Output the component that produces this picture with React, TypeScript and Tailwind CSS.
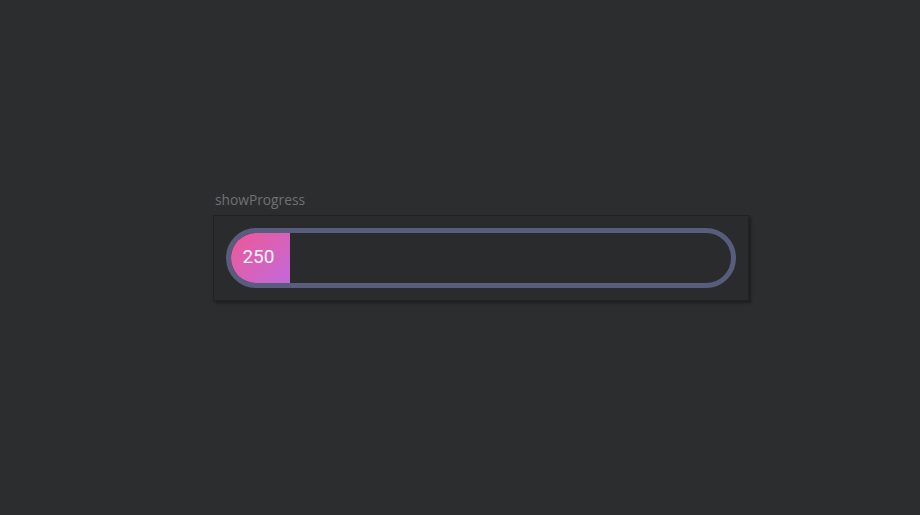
import React from 'react';

export default function App() {
  const value = 250;
  const max = 2125;
  const pct = (value / max) * 100;

  return (
    <div className="min-h-screen w-full bg-[#2c2d2f] flex items-center">
      <div className="ml-[213px] -mt-[24px]">
        <p className="text-[13.75px] leading-[20px] text-[#717171] pl-[2px] mb-[5px] font-['Open_Sans',sans-serif]">
          showProgress
        </p>
        <div className="w-[536px] p-[12px] bg-[#2a2b2d] border border-[#212224] shadow-[2px_2px_3px_rgba(0,0,0,0.35)]">
          <div className="h-[60px] w-full rounded-full border-[5px] border-[#585d7e] overflow-hidden">
            <div
              className="h-full flex items-center justify-center pr-[4px] pb-[2px] bg-gradient-to-br from-[#ee5596] to-[#c268da]"
              style={{ width: `${pct}%` }}
            >
              <span className="text-[19px] text-[#f4f4f4] font-['Roboto',sans-serif]">{value}</span>
            </div>
          </div>
        </div>
      </div>
    </div>
  );
}
